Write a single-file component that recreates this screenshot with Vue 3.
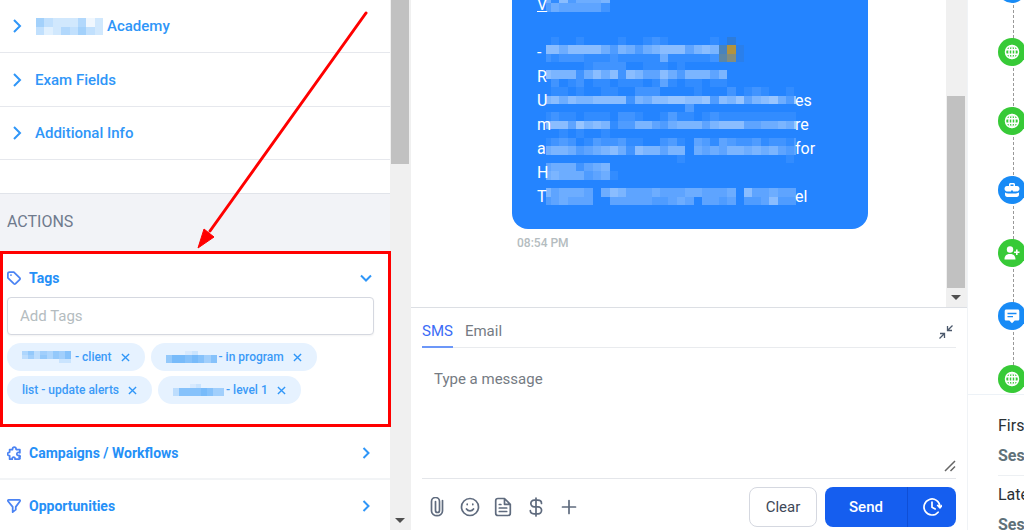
<script setup>
import { ref } from 'vue'

const message = ref('')
const newTag = ref('')

const fields = [
  { label: 'Academy', masked: true },
  { label: 'Exam Fields', masked: false },
  { label: 'Additional Info', masked: false },
]

const tags = [
  { label: '- client', mask: ['46354657', '35364657', '00000022'], size: 'm' },
  { label: '- in program', mask: ['00012000', '68878757', '68878757'], size: 'l' },
  { label: 'list - update alerts', mask: null, size: '' },
  { label: '- level 1', mask: ['000120000', '377778755', '377778755'], size: 'l' },
]

const academyMask = ['64333513', '42354643']

const lines = [
  { start: 'V', end: '', link: true },
  { start: '', end: '' },
  { start: '-', end: '' },
  { start: 'R', end: '' },
  { start: 'U', end: 'es' },
  { start: 'm', end: 're' },
  { start: 'a', end: 'for' },
  { start: 'H', end: '' },
  { start: 'T', end: 'el' },
]

// Each character is the strength of one tile, 0 (clear) to 9.
const redaction = [
  '5173555600000000000000000000000',
  '3544444200000000000000000000000',
  '0000000000000000000000000000000',
  '0000000000000000000000000000000',
  '0000000000000000000000000000000',
  '0100100001001210000010000000000',
  '7757777536535677746763000000000',
  '2122211121111151111121000000000',
  '0000012222001110100000000000000',
  '7666257572764475366646000000000',
  '0201201101110141011011000000000',
  '0110100110022200001000201210010',
  '6757667777265778877837684678538',
  '0000000000000000030000000000000',
  '1211011102210013110121111111111',
  '6774867613366435666467774455658',
  '0010100100000000000000000000000',
  '1232013223110023104314322312213',
  '5665345675276646605454665656434',
  '0000000000000000100000000000010',
  '4555245600000000000000000000000',
  '5655534510000000000000000000000',
  '0000000000000000000000000000000',
  '6455540576444544455444507445444',
  '3454440044444334540443403347333',
]

const toTiles = (rows) =>
  rows.flatMap((row, y) =>
    [...row].map((v, x) => ({ x, y, o: Number(v) / 15, key: `${x}-${y}` })).filter((t) => t.o > 0),
  )
const redactionTiles = toTiles(redaction)

const events = [
  { type: 'chat', tall: false },
  { type: 'globe', tall: true },
  { type: 'globe', tall: true },
  { type: 'case', tall: false },
  { type: 'user', tall: false },
  { type: 'chat', tall: false },
  { type: 'globe', tall: false },
]
</script>

<template>
  <div class="app">
    <aside class="contact">
      <div class="contact-body">
        <button v-for="f in fields" :key="f.label" class="field-row" type="button">
          <svg class="chev" viewBox="0 0 10 16"><path d="M2 2l6 6-6 6" /></svg>
          <svg v-if="f.masked" class="mask mask-name" viewBox="0 0 8 2" preserveAspectRatio="none" shape-rendering="crispEdges" aria-hidden="true">
            <rect v-for="t in toTiles(academyMask)" :key="t.key" :x="t.x" :y="t.y" width="1" height="1" :fill-opacity="t.o" />
          </svg>
          <span>{{ f.label }}</span>
        </button>
        <div class="spacer"></div>
        <h2 class="actions-title">ACTIONS</h2>

        <section class="tags">
          <button class="section-head" type="button">
            <svg class="ico" viewBox="0 0 16 16"><path d="M1 3v4.800l6.800 6.700c.7.6 1.300.6 2 0l4.700-4.700c.6-.6.6-1.200 0-1.900L7.800 1.200H3c-1.200 0-2 .6-2 1.800z" /><path d="M4.500 4.600h.1" /></svg>
            <span>Tags</span>
            <svg class="chev-down" viewBox="0 0 12 8"><path d="M1 1.500l5 5 5-5" /></svg>
          </button>
          <input v-model="newTag" class="tag-input" type="text" placeholder="Add Tags" aria-label="Add Tags" />
          <ul class="chips">
            <li v-for="t in tags" :key="t.label" class="chip">
              <svg v-if="t.mask" class="mask" :class="'mask-' + t.size" :viewBox="`0 0 ${t.mask[0].length} 3`" preserveAspectRatio="none" shape-rendering="crispEdges" aria-hidden="true">
                <rect v-for="c in toTiles(t.mask)" :key="c.key" :x="c.x" :y="c.y" width="1" height="1" :fill-opacity="c.o" />
              </svg>
              <span>{{ t.label }}</span>
              <button class="chip-x" type="button" aria-label="Remove tag">
                <svg viewBox="0 0 10 10"><path d="M1 1l8 8M9 1L1 9" /></svg>
              </button>
            </li>
          </ul>
          <div class="highlight"></div>
        </section>

        <button class="section-row" type="button">
          <svg class="ico" viewBox="0 0 16 16"><path d="M6 15H3v-4C-.2 11.300-.2 7 3 7.200V4h3.300C6 .2 10.700.2 10.400 4h4.300v3.700M14.700 7.700c-1.800-1-3.500 0-3.500 1.500 0 1.300 1.200 2 2.600 1.600M6 15c-.4-3 3.500-3 3.200-.2M13.800 10.800c1.700.2 1.700 2.200 0 2.200 1.600.2 1.500 2 0 2H9.200" /></svg>
          <span>Campaigns / Workflows</span>
          <svg class="chev-right" viewBox="0 0 8 12"><path d="M1.500 1l5 5-5 5" /></svg>
        </button>
        <button class="section-row" type="button">
          <svg class="ico" viewBox="0 0 16 16"><path d="M2 1h12c1 0 1.200.8.8 1.500L10 9v3.200L6.500 15V9L1.200 2.500C.8 1.800 1 1 2 1z" /></svg>
          <span>Opportunities</span>
          <svg class="chev-right" viewBox="0 0 8 12"><path d="M1.500 1l5 5-5 5" /></svg>
        </button>
      </div>
      <div class="track">
        <div class="thumb thumb-contact"></div>
        <svg class="track-arrow" viewBox="0 0 10 5"><path d="M0 0h10L5 5z" /></svg>
      </div>
      <svg class="pointer" viewBox="0 0 180 244" aria-hidden="true">
        <path d="M173 4L17 222" fill="none" stroke="#f00" stroke-width="3" stroke-linecap="round" />
        <path d="M5 239l6-19 10 8z" fill="#f00" stroke="#f00" />
      </svg>
    </aside>

    <main class="conversation">
      <div class="thread">
        <div class="messages">
          <div class="bubble">
            <p v-for="(l, i) in lines" :key="i" class="line">
              <a v-if="l.link" href="#">{{ l.start }}</a>
              <span v-else>{{ l.start }}</span>
              <span class="line-end">{{ l.end }}</span>
            </p>
            <svg class="redaction" viewBox="37 43 2500 2057" preserveAspectRatio="none" shape-rendering="crispEdges" aria-hidden="true">
              <rect v-for="t in redactionTiles" :key="t.key" :x="t.x * 84" :y="t.y * 84" width="84" height="84" fill="#fff" :fill-opacity="t.o" />
              <rect x="1764" y="504" width="84" height="84" fill="#4883bd" />
              <rect x="1764" y="588" width="84" height="84" fill="#5a86a7" />
              <rect x="1848" y="420" width="84" height="84" fill="#2d7cdb" />
              <rect x="1848" y="504" width="84" height="84" fill="#b2933f" />
              <rect x="1848" y="588" width="84" height="84" fill="#828d7e" />
              <rect x="1932" y="504" width="84" height="168" fill="#2a7feb" />
            </svg>
          </div>
          <time class="stamp">08:54 PM</time>
        </div>
        <div class="track">
          <div class="thumb thumb-thread"></div>
          <svg class="track-arrow" viewBox="0 0 10 5"><path d="M0 0h10L5 5z" /></svg>
        </div>
      </div>

      <form class="composer" @submit.prevent>
        <div class="tabs">
          <button class="tab active" type="button">SMS</button>
          <button class="tab" type="button">Email</button>
          <button class="collapse" type="button" aria-label="Collapse">
            <svg viewBox="0 0 16 16"><path d="M14.500 1.500L10 6M9.500 2v4.500H14M1.500 14.500L6 10M2 9.500h4.500V14" /></svg>
          </button>
        </div>
        <div class="editor">
          <textarea v-model="message" placeholder="Type a message" aria-label="Type a message"></textarea>
          <svg class="grip" viewBox="0 0 12 12"><path d="M1 11L11 1M6.500 11L11 6.500" /></svg>
        </div>
        <div class="toolbar">
          <button class="tool" type="button" aria-label="Attach file">
            <svg viewBox="0 0 20 20"><path d="M15.500 3.500v10.500a5.500 4.700 0 0 1-11 0V4.500a3.500 3.500 0 0 1 8 0v9a1.800 1.800 0 0 1-4 0V5M15.500 3.500v2M8.500 5v-.5M4.500 4.500v9" /></svg>
          </button>
          <button class="tool" type="button" aria-label="Insert emoji">
            <svg viewBox="0 0 20 20"><circle cx="10" cy="10" r="8.500" /><path d="M6.500 12c1.600 2.500 5.400 2.500 7 0M7.200 7.200v.4M12.800 7.200v.4" /></svg>
          </button>
          <button class="tool" type="button" aria-label="Insert template">
            <svg viewBox="0 0 20 20"><path d="M11.500 1.500H5c-1.500 0-2.300.8-2.300 2.300v12.400c0 1.500.8 2.300 2.300 2.300h10c1.500 0 2.300-.8 2.300-2.300V7.300zM11.500 1.500v5.800h5.800M6.300 7.500h1.600M6.300 11h7.400M6.300 14.500h7.400" /></svg>
          </button>
          <button class="tool" type="button" aria-label="Request payment">
            <svg viewBox="0 0 20 20"><path d="M10 1v18M15.500 6.500c0-2-1.700-3.300-3.700-3.300H8.200a3.300 3.300 0 0 0 0 6.700h3.900a3.400 3.400 0 0 1 0 6.900H8c-2.200 0-3.700-1.300-3.700-3.200" /></svg>
          </button>
          <button class="tool" type="button" aria-label="More">
            <svg viewBox="0 0 20 20"><path d="M10 3.500v13M3.500 10h13" /></svg>
          </button>
          <button class="clear" type="button">Clear</button>
          <div class="send-group">
            <button class="send" type="submit">Send</button>
            <button class="schedule" type="button" aria-label="Schedule">
              <svg viewBox="0 0 20 20"><path d="M18 9.500a8 8 0 1 0-1.900 5.700M10 5v5.300l3.200 1.600M15.700 8.500l2.300 2.300 2-2.300M13.800 17.200l-1.100.5" /></svg>
            </button>
          </div>
        </div>
      </form>
    </main>

    <aside class="activity">
      <ol class="timeline">
        <li v-for="(e, i) in events" :key="i" class="event" :class="{ tall: e.tall }">
          <span class="dot" :class="e.type">
            <svg v-if="e.type === 'globe'" class="outline" viewBox="0 0 16 16"><circle cx="8" cy="8" r="6.500" /><ellipse cx="8" cy="8" rx="3" ry="6.500" /><path d="M8 1.500v13M2 5.700h12M2 10.300h12" /></svg>
            <svg v-else-if="e.type === 'case'" viewBox="0 0 16 16"><path d="M5 4V2.500C5 1.500 5.700 1 6.500 1h3c.8 0 1.500.5 1.500 1.500V4h2c1.500 0 2.500 1.200 2.500 2.700 0 1.700-1.400 2.800-3.500 2.900H9V8.400H7v1.200H4C1.900 9.500.5 8.400.5 6.700.5 5.200 1.500 4 3 4zm1.500 0h3V2.500h-3zM1 10.600c1 .6 2 .8 3.200.8h7.600c1.200 0 2.200-.2 3.200-.8v2c0 1.500-.8 2.400-2.300 2.400H3.300C1.800 15 1 14.100 1 12.600z" fill-rule="evenodd" /></svg>
            <svg v-else-if="e.type === 'user'" viewBox="0 0 16 16"><circle cx="6" cy="4.500" r="3.200" /><path d="M.5 14.500c0-3.700 2-5.500 5.500-5.500s5.500 1.800 5.500 5.500zM12 4.500h1.600v1.900h1.900V8h-1.900v1.900H12V8h-1.900V6.400H12z" /></svg>
            <svg v-else viewBox="0 0 16 16"><path d="M2.300 1.500h11.400c1 0 1.600.6 1.600 1.600v7.800c0 1-.6 1.600-1.600 1.600h-3L8 15.200l-2.700-2.700h-3c-1 0-1.600-.6-1.600-1.600V3.100c0-1 .6-1.600 1.600-1.600zM3.500 4.800v1.400h9V4.800zm0 3.100v1.400H9V7.900z" fill-rule="evenodd" /></svg>
          </span>
        </li>
      </ol>
      <dl class="attribution">
        <div class="pair"><dt>First</dt><dd>Session</dd></div>
        <div class="pair"><dt>Latest</dt><dd>Session</dd></div>
      </dl>
    </aside>
  </div>
</template>

<style>
body { margin: 0; overflow: hidden; }
</style>

<style scoped>
* { box-sizing: border-box; }
.app {
  display: grid;
  grid-template-columns: 411px minmax(0, 1fr) 57px;
  height: 100vh;
  overflow: hidden;
  background: #fff;
  font-family: Roboto, "Liberation Sans", sans-serif;
}
button { font: inherit; border: 0; background: none; padding: 0; margin: 0; cursor: pointer; }
svg { display: block; flex: none; }
h2, p, ul, ol, dl, dd { margin: 0; padding: 0; list-style: none; }

.contact { position: relative; display: flex; min-height: 0; overflow: hidden; }
.contact-body { flex: 1; min-width: 0; }
.track {
  display: flex;
  flex-direction: column;
  justify-content: space-between;
  align-items: center;
  width: 21px;
  background: #f0f0f0;
  padding: 0 1px 7px 0;
}
.thumb { width: 18px; background: #c1c1c1; }
.thumb-contact { height: 164px; }
.thumb-thread { height: 192px; margin-top: 96px; }
.track-arrow { width: 10px; height: 5px; fill: #505050; }

.field-row {
  display: flex;
  align-items: center;
  width: 100%;
  height: 53px;
  padding-left: 12px;
  border-bottom: 1px solid #e6e8ed;
  color: #2f96f8;
  font-size: 15px;
  font-weight: 500;
}
.field-row:nth-child(2) { height: 54px; }
.chev { width: 10px; height: 16px; margin-right: 13px; fill: none; stroke: #2f96f8; stroke-width: 2; }
.mask { fill: #188bf6; }
.mask-name { width: 67px; height: 17px; margin-right: 4px; margin-left: 1px; }
.spacer { height: 33px; }
.actions-title {
  height: 58px;
  border-top: 1px solid #e1e4ea;
  background: #f2f3f7;
  padding-left: 7px;
  color: #6f7a8d;
  font-size: 16px;
  font-weight: 400;
  line-height: 56px;
}
.tags { position: relative; height: 176px; padding: 15px 16px 0 7px; }
.section-head, .section-row {
  display: flex;
  align-items: center;
  width: 100%;
  color: #2590f7;
  font-size: 14px;
  font-weight: 700;
}
.section-head { height: 24px; margin-bottom: 7px; }
.ico { width: 14px; height: 14px; margin-right: 8px; fill: none; stroke: #4b83f3; stroke-width: 2; stroke-linejoin: round; stroke-linecap: round; }
.chev-down { width: 12px; height: 8px; margin-left: auto; margin-right: 2px; fill: none; stroke: #2f96f8; stroke-width: 2; }
.section-row { height: 53px; padding: 0 20px 0 7px; border-bottom: 2px solid #f2f4f6; }
.chev-right { width: 8px; height: 12px; margin-left: auto; fill: none; stroke: #2f96f8; stroke-width: 2; }
.tag-input {
  display: block;
  width: 100%;
  height: 38px;
  padding: 0 12px;
  border: 1px solid #d5d8e0;
  border-radius: 4px;
  box-shadow: 0 1px 2px #0000000d;
  font: 15px Roboto, sans-serif;
  outline: none;
}
.tag-input::placeholder { color: #b4bcc0; }
.chips { display: flex; flex-wrap: wrap; gap: 5px 6px; margin-top: 8px; }
.chip {
  display: flex;
  align-items: center;
  height: 28px;
  padding: 0 15px;
  border-radius: 14px;
  background: #e6f2ff;
  color: #3b9af7;
  font-size: 12px;
  font-weight: 500;
  white-space: nowrap;
}
.mask-m { width: 49px; height: 12px; margin-right: 4px; }
.mask-l { width: 51px; height: 12px; margin-right: 2px; }
.chip-x { display: flex; margin-left: 9px; padding: 1px 0 0; }
.chip-x svg { width: 9px; height: 9px; stroke: #2f96f8; stroke-width: 1.500; }
.highlight { position: absolute; inset: 0 -1px 0 0; border: 3px solid #f00; pointer-events: none; }
.pointer { position: absolute; left: 193px; top: 9px; width: 180px; height: 244px; pointer-events: none; }

.conversation { display: flex; flex-direction: column; min-height: 0; }
.thread { display: flex; flex: 1; min-height: 0; overflow: hidden; }
.messages { flex: 1; display: flex; flex-direction: column; justify-content: flex-end; padding: 0 78px 56px 101px; }
.bubble {
  position: relative;
  padding: 0 25px 20px;
  border-radius: 0 0 16px 16px;
  background: #2484ff;
  color: #fff;
  font-size: 16px;
  line-height: 24px;
}
.line { display: flex; height: 24px; }
.line a { color: #fff; }
.line-end { margin-left: auto; width: 48px; }
.redaction { position: absolute; left: 34px; bottom: 24px; width: 250px; height: 206px; }
.stamp { margin: 6px 0 0 5px; color: #b4bcc0; font-size: 12px; font-weight: 500; line-height: 16px; }

.composer { border-top: 1px solid #dcdfe4; padding: 0 11px; }
.tabs { display: flex; gap: 12px; height: 40px; border-bottom: 1px solid #e9ebee; }
.tab {
  height: 40px;
  padding-top: 4px;
  border-bottom: 2px solid transparent;
  color: #757b83;
  font-size: 15px;
  line-height: 38px;
}
.tab.active { color: #3b6cf6; border-color: #6c97f8; }
.collapse { margin: 9px 2px 0 auto; }
.collapse svg { width: 16px; height: 16px; fill: none; stroke: #4b586b; stroke-width: 1.300; }
.editor { position: relative; height: 131px; border-bottom: 1px solid #e4e6ea; }
textarea {
  display: block;
  width: 100%;
  height: 100%;
  border: 0;
  outline: none;
  resize: none;
  padding: 20px 12px;
  font: 15px/22px Roboto, sans-serif;
}
textarea::placeholder { color: #757b83; }
.grip { position: absolute; right: 0; bottom: 6px; width: 12px; height: 12px; stroke: #666; stroke-width: 1.500; }
.toolbar { display: flex; align-items: center; height: 51px; padding: 8px 0 3px 5px; }
.tool { margin-right: 13px; }
.tool svg { width: 20px; height: 20px; fill: none; stroke: #5f6b7e; stroke-width: 1.700; stroke-linecap: round; stroke-linejoin: round; }
.clear {
  width: 68px;
  height: 40px;
  margin-left: auto;
  margin-right: 8px;
  border: 1px solid #d5d8e0;
  border-radius: 8px;
  color: #3d4858;
  font-size: 15px;
}
.send-group { display: flex; height: 40px; border-radius: 8px; overflow: hidden; background: #155eef; color: #fff; }
.send { width: 83px; color: #fff; font-size: 15px; font-weight: 500; border-right: 1px solid #0f4fd6; }
.schedule { display: flex; align-items: center; justify-content: center; width: 48px; }
.schedule svg { width: 20px; height: 20px; fill: none; stroke: #fff; stroke-width: 1.700; stroke-linecap: round; stroke-linejoin: round; }

.activity { display: flex; flex-direction: column; min-width: 0; overflow: hidden; border-left: 1px solid #f0f3f6; }
.timeline { flex: none; height: 419px; margin-top: -25px; padding-left: 30px; overflow: hidden; }
.event {
  height: 63px;
  width: 28px;
  background: repeating-linear-gradient(#999 0 3px, transparent 3px 5px) 15px 0 / 1px 100% no-repeat;
}
.event.tall { height: 69px; }
.dot { display: flex; align-items: center; justify-content: center; width: 28px; height: 28px; border-radius: 50%; background: #188bf6; }
.dot.globe, .dot.user { background: #37ca37; }
.dot svg { width: 16px; height: 16px; fill: #fff; }
.dot svg.outline { fill: none; stroke: #fff; stroke-width: 1.500; }
.attribution { border-top: 1px solid #edf2f7; padding: 15px 0 0 30px; font-size: 16px; white-space: nowrap; }
.pair { height: 66px; border-bottom: 1px solid #edf0f3; margin-bottom: 3px; }
.pair dt { color: #2a3135; line-height: 32px; }
.pair dd { color: #607179; font-weight: 700; line-height: 28px; }
</style>
